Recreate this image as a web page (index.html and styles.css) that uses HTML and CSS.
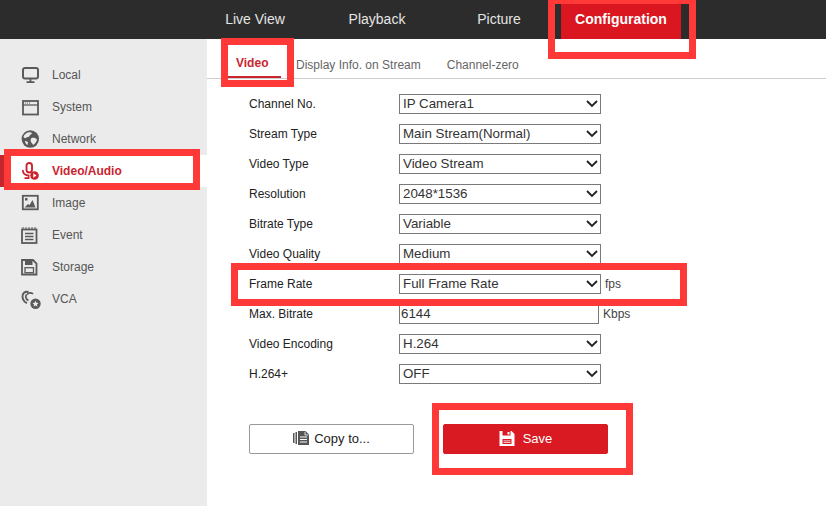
FILE: index.html
```html
<!DOCTYPE html>
<html lang="en">
<head>
<meta charset="utf-8">
<title>Configuration</title>
<link rel="stylesheet" href="styles.css">
</head>
<body>
<div class="page">
  <header class="topbar">
    <a class="nav-item">Live View</a>
    <a class="nav-item">Playback</a>
    <a class="nav-item">Picture</a>
    <a class="nav-item active">Configuration</a>
  </header>
  <div class="body">
    <aside class="sidebar">
      <div class="menu-item">
        <svg class="menu-icon" viewBox="0 0 18 18"><rect x="2" y="2" width="15" height="10.500" rx="2" fill="none" stroke="currentColor" stroke-width="2"/><path d="M9.500 13v3M5.500 16.200h8" fill="none" stroke="currentColor" stroke-width="1.800"/></svg>
        <span>Local</span>
      </div>
      <div class="menu-item">
        <svg class="menu-icon" viewBox="0 0 18 18"><rect x="2" y="3" width="15" height="13.500" fill="none" stroke="currentColor" stroke-width="1.800"/><path d="M2 7h15" stroke="currentColor" stroke-width="1.300"/><path d="M4 5h1M6 5h1M8 5h1" stroke="currentColor"/></svg>
        <span>System</span>
      </div>
      <div class="menu-item">
        <svg class="menu-icon" viewBox="0 0 18 18"><circle cx="9.300" cy="9" r="8.700" fill="currentColor"/><path d="M5 3.500c2-1.500 5-1.500 6-.5-.5 1.500-2 1.500-2.500 3s-3 .5-3.500 2c-.5.500-2.500-.5-2.500-1 0-1.500 1.500-2.500 2.500-3.500zM10.500 8c2-.5 4.500 0 5.500 1.500-.5 2.500-2 4.500-4 5.500-.5-1.500-1.500-2-2-3s-.5-3 .5-4zM4 11c1 0 2.500.5 3 1.500l-.5 2.500c-1-.5-2.500-2.500-2.500-4z" fill="#ebebeb"/></svg>
        <span>Network</span>
      </div>
      <div class="menu-item selected">
        <svg class="menu-icon" viewBox="0 0 18 18"><rect x="5.500" y="1" width="5.500" height="9.500" rx="2.700" fill="none" stroke="currentColor" stroke-width="1.900"/><path d="M1.800 8c0 3.500 2.700 5.500 6.700 5.500M7.500 13.500v3M3.500 16.200h5" fill="none" stroke="currentColor" stroke-width="1.700"/><circle cx="13.500" cy="13.500" r="4.300" fill="currentColor"/><path d="M12.300 11.300v4.400l3.300-2.200z" fill="#fff"/></svg>
        <span>Video/Audio</span>
      </div>
      <div class="menu-item">
        <svg class="menu-icon" viewBox="0 0 18 18"><rect x="1.800" y="1.800" width="15" height="13.500" fill="none" stroke="currentColor" stroke-width="1.800"/><rect x="4" y="4" width="2.500" height="2.500" fill="currentColor"/><path d="M3.500 13.500l3.500-3.500 1.500 1 3-5 3 7.500z" fill="currentColor"/></svg>
        <span>Image</span>
      </div>
      <div class="menu-item">
        <svg class="menu-icon" viewBox="0 0 18 18"><rect x="1" y="3.500" width="14.500" height="13.500" fill="none" stroke="currentColor" stroke-width="1.800"/><path d="M4 7.500h8.500M4 10.500h8.500M4 13.500h8.500" stroke="currentColor" stroke-width="1.300"/><path d="M2 1v3M5 1v3M8 1v3M11 1v3M14 1v3" stroke="currentColor"/></svg>
        <span>Event</span>
      </div>
      <div class="menu-item">
        <svg class="menu-icon" viewBox="0 0 18 18"><path d="M1 2h11l3.500 3.500V16.500H1z" fill="none" stroke="currentColor" stroke-width="1.800"/><path d="M4 2h7.500v5H4z" fill="currentColor"/><rect x="4" y="9.700" width="8.500" height="5" fill="none" stroke="currentColor" stroke-width="1.300"/></svg>
        <span>Storage</span>
      </div>
      <div class="menu-item">
        <svg class="menu-icon" viewBox="0 0 18 18"><path d="M7.500 2C4 .8 1 3.500 1.500 7c.3 2.500 2 5 4.500 6.200" fill="none" stroke="currentColor" stroke-width="2"/><path d="M5.500 4.500c-1.500 2-.5 5 2 6M12 4c-1.500-1.500-4-1.500-6 .5" fill="none" stroke="currentColor" stroke-width="1.700"/><circle cx="14.500" cy="13.800" r="5.200" fill="currentColor"/><path d="M14.500 10.800l.9 2 2.100.2-1.600 1.400.5 2.100-1.900-1.100-1.900 1.100.5-2.100-1.600-1.400 2.100-.2z" fill="#ebebeb"/></svg>
        <span>VCA</span>
      </div>
    </aside>
    <main class="content">
      <nav class="tabs">
        <a class="tab current">Video</a>
        <a class="tab">Display Info. on Stream</a>
        <a class="tab">Channel-zero</a>
      </nav>
      <form class="form">
        <div class="row"><label class="label">Channel No.</label><div class="field"><select class="select"><option>IP Camera1</option></select><svg class="chevron" viewBox="0 0 12 8"><path d="M1 1l5 5 5-5" fill="none" stroke="#222" stroke-width="1.800"/></svg></div></div>
        <div class="row"><label class="label">Stream Type</label><div class="field"><select class="select"><option>Main Stream(Normal)</option></select><svg class="chevron" viewBox="0 0 12 8"><path d="M1 1l5 5 5-5" fill="none" stroke="#222" stroke-width="1.800"/></svg></div></div>
        <div class="row"><label class="label">Video Type</label><div class="field"><select class="select"><option>Video Stream</option></select><svg class="chevron" viewBox="0 0 12 8"><path d="M1 1l5 5 5-5" fill="none" stroke="#222" stroke-width="1.800"/></svg></div></div>
        <div class="row"><label class="label">Resolution</label><div class="field"><select class="select"><option>2048*1536</option></select><svg class="chevron" viewBox="0 0 12 8"><path d="M1 1l5 5 5-5" fill="none" stroke="#222" stroke-width="1.800"/></svg></div></div>
        <div class="row"><label class="label">Bitrate Type</label><div class="field"><select class="select"><option>Variable</option></select><svg class="chevron" viewBox="0 0 12 8"><path d="M1 1l5 5 5-5" fill="none" stroke="#222" stroke-width="1.800"/></svg></div></div>
        <div class="row"><label class="label">Video Quality</label><div class="field"><select class="select"><option>Medium</option></select><svg class="chevron" viewBox="0 0 12 8"><path d="M1 1l5 5 5-5" fill="none" stroke="#222" stroke-width="1.800"/></svg></div></div>
        <div class="row"><label class="label">Frame Rate</label><div class="field"><select class="select"><option>Full Frame Rate</option></select><svg class="chevron" viewBox="0 0 12 8"><path d="M1 1l5 5 5-5" fill="none" stroke="#222" stroke-width="1.800"/></svg></div><span class="unit">fps</span></div>
        <div class="row"><label class="label">Max. Bitrate</label><input class="input" type="text" value="6144"><span class="unit">Kbps</span></div>
        <div class="row"><label class="label">Video Encoding</label><div class="field"><select class="select"><option>H.264</option></select><svg class="chevron" viewBox="0 0 12 8"><path d="M1 1l5 5 5-5" fill="none" stroke="#222" stroke-width="1.800"/></svg></div></div>
        <div class="row"><label class="label">H.264+</label><div class="field"><select class="select"><option>OFF</option></select><svg class="chevron" viewBox="0 0 12 8"><path d="M1 1l5 5 5-5" fill="none" stroke="#222" stroke-width="1.800"/></svg></div></div>
        <div class="actions">
          <button class="btn btn-copy" type="button">
            <svg class="btn-icon" viewBox="0 0 16 15"><path d="M0 2h1.500v10H0zM2.500 1H4v12H2.500z" fill="#555"/><path d="M5 0h7.500L16 3.500V14H5z" fill="#555"/><path d="M12 .8V4h3.200" fill="none" stroke="#fff" stroke-width=".8"/><path d="M7 5.500h7v1H7zM7 8h7v1H7zM7 10.500h7v1H7z" fill="#fff"/></svg>
            <span>Copy to...</span>
          </button>
          <button class="btn btn-save" type="button">
            <svg class="btn-icon" viewBox="0 0 15 15"><path d="M0 0h12l3 3v12H0z" fill="#fff"/><path d="M3 0h8v4.500H3z" fill="#da1a22"/><path d="M8 1h2v2.500H8z" fill="#fff"/><rect x="3" y="8" width="9" height="5" fill="#da1a22"/><path d="M4 9.500h7v.8H4zM4 11h7v.8H4z" fill="#fff"/></svg>
            <span>Save</span>
          </button>
        </div>
      </form>
    </main>
  </div>
  <div class="mark mark-config"></div>
  <div class="mark mark-tab"></div>
  <div class="mark mark-menu"></div>
  <div class="mark mark-frame"></div>
  <div class="mark mark-save"></div>
</div>
</body>
</html>
```
FILE: styles.css
```css
* { box-sizing: border-box; }
html, body { margin: 0; height: 100%; overflow: hidden; }
body { background: #fff; font-family: "Liberation Sans", Arial, sans-serif; }
.page { position: relative; width: 826px; height: 506px; overflow: hidden; display: flex; flex-direction: column; }

.topbar { height: 39px; flex: none; background: #2c2c2c; display: flex; gap: 2px; padding-left: 195px; }
.nav-item { width: 120px; text-align: center; line-height: 39px; font-size: 14px; color: #e4e4e4; }
.nav-item.active { background: #da1620; color: #fff; font-weight: bold; }

.body { flex: 1; display: flex; min-height: 0; }
.sidebar { width: 207px; flex: none; background: #ebebeb; padding-top: 20px; }
.menu-item { height: 32px; display: flex; align-items: center; padding-left: 21px; gap: 13px; font-size: 12px; color: #555; }
.menu-item.selected { background: #fff; color: #c9252f; font-weight: bold; border-left: 4px solid #c5252c; padding-left: 17px; }
.menu-icon { width: 18px; height: 18px; flex: none; color: #5a5a5a; overflow: visible; }
.selected .menu-icon { color: #c9252f; }

.content { flex: 1; min-width: 0; }
.tabs { height: 40px; border-bottom: 1px solid #ccc; display: flex; padding-left: 21px; }
.tab { height: 39px; padding-top: 19px; font-size: 12px; line-height: 14px; color: #666; margin-right: 26px; }
.tab.current { width: 53px; margin-right: 15px; padding: 17px 0 0 8px; color: #c9252f; font-weight: bold; border-bottom: 2px solid #c9252f; }

.form { padding: 10px 0 0 42px; }
.row { height: 30px; display: flex; align-items: center; font-size: 12px; color: #222; }
.label { width: 150px; flex: none; }
.field { position: relative; width: 202px; height: 20px; flex: none; }
.select { appearance: none; -webkit-appearance: none; display: block; width: 100%; height: 100%; border: 1px solid #7a7a7a; border-radius: 0; background: #fff; padding: 0 0 2px 3px; font-family: inherit; font-size: 13.33px; color: #333; }
.chevron { position: absolute; right: 3px; top: 6px; width: 12px; height: 8px; pointer-events: none; }
.input { width: 200px; height: 20px; flex: none; border: 1px solid #7a7a7a; padding: 0 0 2px 1px; font-family: inherit; font-size: 13.33px; color: #333; }
.unit { margin-left: 4px; color: #444; }

.actions { display: flex; gap: 29px; margin-top: 35px; }
.btn { width: 165px; height: 30px; border-radius: 2px; display: flex; align-items: center; justify-content: center; gap: 5px; font-family: inherit; font-size: 13px; padding: 0 0 1px; }
.btn-icon { width: 16px; height: 15px; flex: none; }
.btn-copy { background: #fff; border: 1px solid #999; color: #222; }
.btn-save { background: #da1a22; border: 1px solid #da1a22; color: #fff; gap: 8px; }

.mark { position: absolute; border: 7px solid #ff3838; pointer-events: none; }
.mark-config { left: 548px; top: -3px; width: 148px; height: 62px; }
.mark-tab { left: 221px; top: 38px; width: 73px; height: 49px; }
.mark-menu { left: 4px; top: 149px; width: 196px; height: 41px; }
.mark-frame { left: 231px; top: 263px; width: 456px; height: 43px; }
.mark-save { left: 432px; top: 403px; width: 201px; height: 72px; }
```
